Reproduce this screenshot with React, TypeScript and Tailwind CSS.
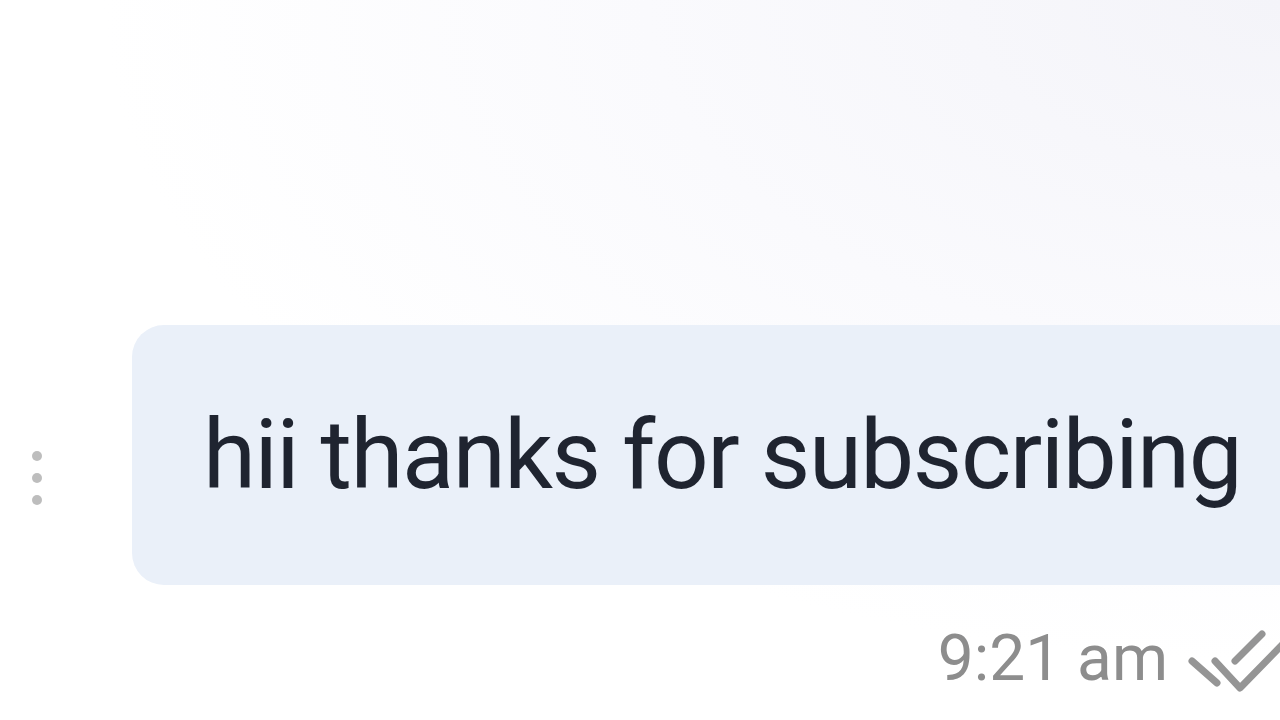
export default function App() {
  return (
    <div
      className="relative h-[720px] w-[1280px] overflow-hidden bg-[radial-gradient(ellipse_at_100%_0%,#f4f4f9_0%,#fafafd_35%,#ffffff_65%)]"
      style={{ fontFamily: "Roboto, 'Noto Sans', sans-serif" }}
    >
      <div className="flex h-full flex-col pt-[325px]">
        {/* Message row */}
        <div className="flex items-center">
          <div className="mt-[46px] flex w-[132px] shrink-0 flex-col items-start gap-[12px] pl-[32px]">
            <span className="h-[10px] w-[10px] rounded-full bg-[#bdbdbd]" />
            <span className="h-[10px] w-[10px] rounded-full bg-[#bdbdbd]" />
            <span className="h-[10px] w-[10px] rounded-full bg-[#bdbdbd]" />
          </div>
          <div className="flex h-[260px] min-w-0 flex-1 items-center rounded-l-[32px] bg-[#eaf0f9] pl-[71px]">
            <span className="whitespace-nowrap text-[96px] leading-none tracking-[-0.015em] text-[#1f2430]">
              hii thanks for subscribing
            </span>
          </div>
        </div>

        {/* Timestamp */}
        <div className="mt-[42px] flex items-center justify-end gap-[20px]">
          <span className="text-[64px] leading-none text-[#8d8d8d]">9:21 am</span>
          <svg width="92" height="64" viewBox="0 0 92 64" className="shrink-0 overflow-visible">
            <path d="M4 34 L29 56" stroke="#959595" strokeWidth="7" strokeLinecap="round" fill="none" />
            <path d="M27 34 L52 61 L94 18" stroke="#959595" strokeWidth="7" strokeLinecap="round" strokeLinejoin="round" fill="none" />
            <path d="M47 34 L74 7" stroke="#959595" strokeWidth="7" strokeLinecap="round" fill="none" />
          </svg>
        </div>
      </div>
    </div>
  );
}
